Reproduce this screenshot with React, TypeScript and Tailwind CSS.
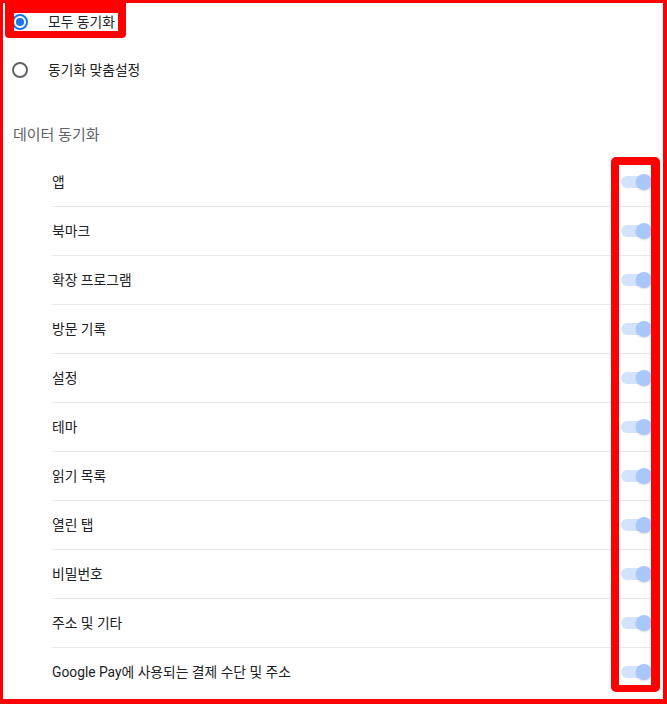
import React from "react";

const items = [
  "앱",
  "북마크",
  "확장 프로그램",
  "방문 기록",
  "설정",
  "테마",
  "읽기 목록",
  "열린 탭",
  "비밀번호",
  "주소 및 기타",
  "Google Pay에 사용되는 결제 수단 및 주소",
];

const Radio = ({ checked }: { checked: boolean }) => (
  <div
    className={`box-border flex h-4 w-4 shrink-0 items-center justify-center rounded-full border-2 ${
      checked ? "border-[#1a73e8]" : "border-[#5f6368]"
    }`}
  >
    {checked && <div className="h-2 w-2 rounded-full bg-[#1a73e8]"></div>}
  </div>
);

const Toggle = () => (
  <div className="relative h-4 w-[31px] shrink-0">
    <div className="absolute left-0 top-[2px] h-3 w-[26px] rounded-full bg-[#d3e3fc]"></div>
    <div className="absolute right-0 top-0 h-4 w-4 rounded-full bg-[#a8c7fa] shadow-[0_1px_2px_rgba(0,0,0,0.15)]"></div>
  </div>
);

export default function App() {
  return (
    <div className="relative box-border h-[704px] w-[667px] overflow-hidden border-b-[5px] border-l-[3px] border-r-[4px] border-t-[3px] border-[#ff0000] bg-white font-[Roboto,'Noto_Sans_CJK_KR',sans-serif] text-[13.8px] text-[#202124]">
      <div className="flex h-[38px] items-center gap-5 pl-[9px]">
        <Radio checked />
        <span>모두 동기화</span>
      </div>
      <div className="mt-[5px] flex h-12 items-center gap-5 pl-[9px]">
        <Radio checked={false} />
        <span>동기화 맞춤설정</span>
      </div>
      <div className="mt-[31px] pl-[10px] text-[15px] leading-5 text-[#5f6368]">
        데이터 동기화
      </div>
      <div className="ml-[49px] mt-[13px] w-[603px]">
        {items.map((label, i) => (
          <div
            key={label}
            className={`flex items-center justify-between pr-[3px] ${
              i === 0 ? "h-12" : "h-[49px] border-t border-[#e8e8e8]"
            }`}
          >
            <span>{label}</span>
            <Toggle />
          </div>
        ))}
      </div>

      {/* annotation boxes */}
      <div className="absolute left-[2px] top-[-3px] box-border h-[38px] w-[121px] rounded-[4px] border-b-[7px] border-l-[9px] border-r-[8px] border-t-[13px] border-[#ff0000]"></div>
      <div className="absolute left-[608px] top-[154px] box-border h-[535px] w-[49px] rounded-[5px] border-b-[7px] border-l-[8px] border-r-[9px] border-t-[8px] border-[#ff0000]"></div>
    </div>
  );
}
